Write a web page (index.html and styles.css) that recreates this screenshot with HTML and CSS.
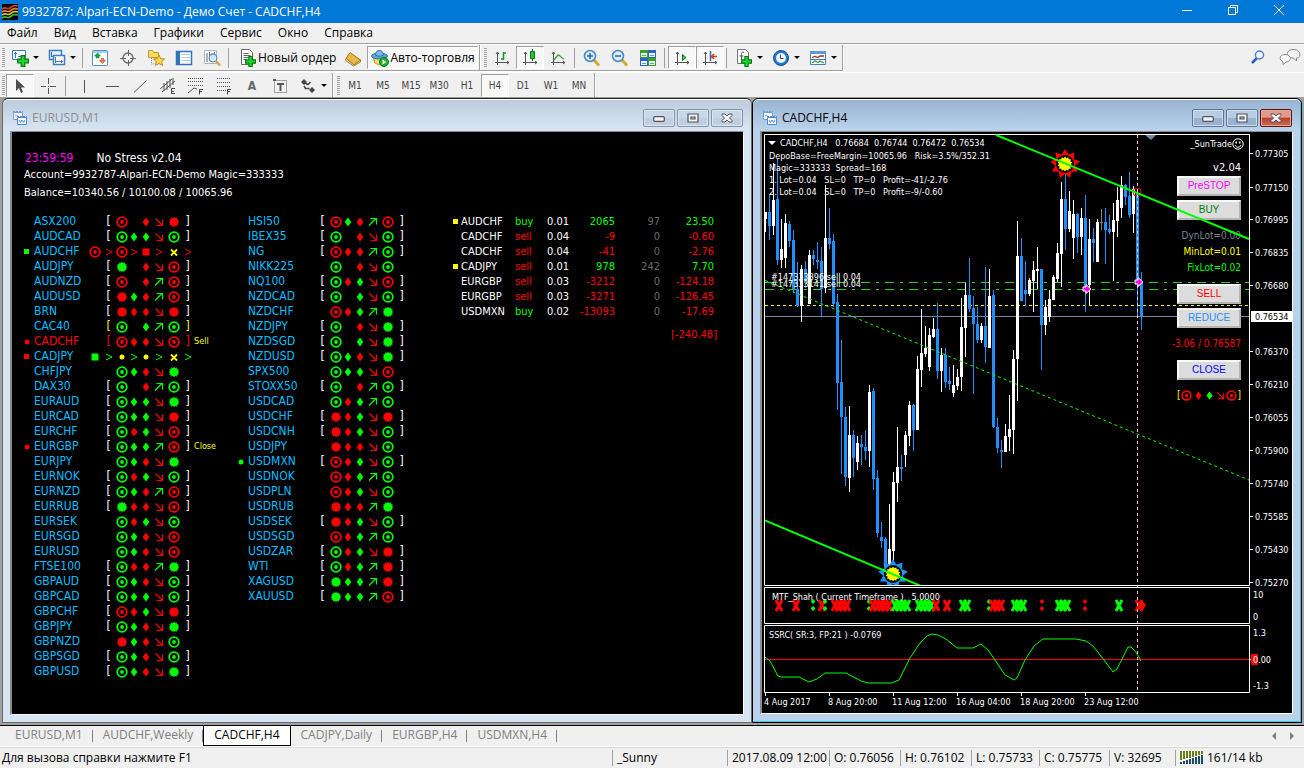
FILE: index.html
```html
<!DOCTYPE html>
<html lang="ru">
<head>
<meta charset="utf-8">
<title>9932787: Alpari-ECN-Demo - Демо Счет - CADCHF,H4</title>
<link rel="stylesheet" href="styles.css">
</head>
<body>
<svg class="defs" aria-hidden="true">
  <symbol id="s-target" viewBox="0 0 12 12"><circle cx="6" cy="6" r="4.800" fill="none" stroke="currentColor" stroke-width="1.800"/><circle cx="6" cy="6" r="1.900" fill="currentColor"/></symbol>
  <symbol id="s-burst" viewBox="0 0 12 12"><polygon fill="currentColor" points="11.5,6 9.86,7.03 10.8,8.75 8.83,8.83 8.75,10.8 7.03,9.86 6,11.5 4.97,9.86 3.25,10.8 3.17,8.83 1.2,8.75 2.14,7.03 .5,6 2.14,4.97 1.2,3.25 3.17,3.17 3.25,1.2 4.97,2.14 6,.5 7.03,2.14 8.75,1.2 8.83,3.17 10.8,3.25 9.86,4.97"/></symbol>
  <symbol id="s-diamond" viewBox="0 0 12 12"><path fill="currentColor" d="M6 1.500L9.300 6 6 10.500 2.700 6z"/></symbol>
  <symbol id="s-down" viewBox="0 0 12 12"><path fill="none" stroke="currentColor" stroke-width="1.200" d="M2.500 2.500l6.500 6.500M9.500 3.500v6H3.500"/></symbol>
  <symbol id="s-up" viewBox="0 0 12 12"><path fill="none" stroke="currentColor" stroke-width="1.200" d="M2 9.500l7-7M3.500 2.500h6v6"/></symbol>
  <symbol id="s-gt" viewBox="0 0 12 12"><path fill="none" stroke="currentColor" d="M3 3l6 3-6 3"/></symbol>
  <symbol id="s-square" viewBox="0 0 12 12"><path fill="currentColor" d="M2.500 2.500h7v7h-7z"/></symbol>
  <symbol id="s-mark" viewBox="0 0 12 12"><path fill="currentColor" d="M3 3h5v5H3z"/></symbol>
  <symbol id="s-dot" viewBox="0 0 12 12"><circle cx="6" cy="6" r="2.500" fill="currentColor"/></symbol>
  <symbol id="s-cross" viewBox="0 0 12 12"><path fill="none" stroke="currentColor" stroke-width="1.800" d="M3 3.500l6 6M9 3.500l-6 6"/></symbol>
  <symbol id="i-mdi" viewBox="0 0 14 14"><path fill="#fff" stroke="#6b9bea" d="M.5 1.500h9v7h-9z"/><path stroke="#6b9bea" stroke-dasharray="2 1" d="M0 .5h10"/><path fill="none" stroke="#6b9bea" d="M2 5l1.500-1L5 5.500"/><path fill="#fff" stroke="#4f86e4" d="M4.500 6.500h9v7h-9z"/><path stroke="#4f86e4" stroke-dasharray="2 1" d="M4 5.500h10"/><path fill="none" stroke="#4f86e4" d="M6 9l1.500 2.500L9 9l1.500 2.500L12 9"/></symbol>
  <symbol id="i-min" viewBox="0 0 12 12"><rect x=".7" y="4.700" width="10.600" height="4.600" rx="1" fill="#f4f4f4" stroke="#4d5363" stroke-width="1.200"/></symbol>
  <symbol id="i-max" viewBox="0 0 12 12"><path fill="#f4f4f4" fill-rule="evenodd" stroke="#4d5363" stroke-width="1.200" d="M1 2h10v8H1zM4 5h4v2H4z"/></symbol>
  <symbol id="i-x" viewBox="0 0 12 12"><path fill="#f4f4f4" stroke="#4d5363" d="M1 2h3l2 2 2-2h3v1.500L8.500 6 11 8.500V10H8L6 8l-2 2H1V8.500L3.500 6 1 3.500z"/></symbol>
  <symbol id="i-plus" viewBox="0 0 10 10"><path fill="#1fd72e" stroke="#087a12" d="M3.500.5h3v3h3v3h-3v3h-3v-3h-3v-3h3z"/></symbol>
  <symbol id="i-axes" viewBox="0 0 18 18"><path fill="none" stroke="#555" d="M4.500 3v13M2 13.500h14M3 5l1.500-2L6 5M14 12l2 1.500-2 1.500"/></symbol>
</svg>

<div class="app">
  <header class="titlebar">
    <svg class="logo" viewBox="0 0 16 16"><path d="M0 0h16v16H0z"/><g fill="none" stroke-width="1.600"><path stroke="#e8342a" d="M0 5c4-3 5 1 8-1s4-3 8-2"/><path stroke="#f28a1e" d="M0 8c4-3 5 1 8-1s4-3 8-2"/><path stroke="#c8d42a" d="M0 11c4-3 5 1 8-1s4-3 8-2"/><path stroke="#4cb82e" d="M0 14c4-3 5 1 8-1s4-3 8-2"/></g></svg>
    <h1 class="title">9932787: Alpari-ECN-Demo - Демо Счет - CADCHF,H4</h1>
    <div class="sysbuttons">
      <button aria-label="Свернуть"><svg viewBox="0 0 10 10"><path d="M0 5.500h10"/></svg></button>
      <button aria-label="Восстановить"><svg viewBox="0 0 10 10"><path d="M.5 2.500h7v7h-7zM2.500 2V.5h7v7H8"/></svg></button>
      <button aria-label="Закрыть"><svg viewBox="0 0 10 10"><path d="M0 0l10 10M10 0L0 10"/></svg></button>
    </div>
  </header>

  <nav class="menu">
    <button>Файл</button><button>Вид</button><button>Вставка</button><button>Графики</button><button>Сервис</button><button>Окно</button><button>Справка</button>
  </nav>

  <div class="toolrow">
    <div class="toolbar">
      <i class="grip"></i>
      <button class="tool drop" aria-label="Новый график"><svg viewBox="0 0 18 18"><path fill="#fff" stroke="#3b7cc0" d="M1.500 1.500h13v9h-13z"/><path stroke="#3b7cc0" fill="none" d="M4.500 3v6M3 4.500h3M7 7.500h6M11.500 6v3"/><use href="#i-plus" x="6" y="6" width="12" height="12"/></svg></button>
      <button class="tool drop" aria-label="Профили"><svg viewBox="0 0 18 18"><path fill="#e8f2fc" stroke="#3b7cc0" stroke-width="1.500" d="M1.500 1.500h12v9h-12z"/><path fill="none" stroke="#3b7cc0" d="M3.500 3v5M3 7.500h2"/><path fill="#fff" stroke="#3b7cc0" stroke-width="1.500" d="M5.500 6.500h11v9h-11z"/><path stroke="#3b7cc0" fill="none" d="M7.500 8v6M7 12.500h8M13.500 11v3"/></svg></button>
      <i class="sep"></i>
      <button class="tool" aria-label="Обзор рынка"><svg viewBox="0 0 18 18"><rect x="1.500" y="1.500" width="15" height="15" rx="1" fill="#fff" stroke="#4a90d0"/><path stroke="#a8cdec" stroke-width="2" d="M2 3h14"/><path fill="#18a83c" stroke="#0d7a26" stroke-width=".5" d="M6.500 4l3 3H8v2H5V7H3.500z"/><path fill="#f47a40" stroke="#c8401c" stroke-width=".5" d="M11.500 14.500l-3-3H10v-2h3v2h1.500z"/></svg></button>
      <button class="tool" aria-label="Окно данных"><svg viewBox="0 0 18 18"><circle cx="9" cy="9" r="5" fill="none" stroke="#666" stroke-width="1.300"/><path stroke="#666" d="M9.500 1v6M9.500 11v6M1 9.500h6M11 9.500h6"/></svg></button>
      <button class="tool" aria-label="Навигатор"><svg viewBox="0 0 18 18"><path fill="#f8dc6a" stroke="#c89a20" d="M1.500 3.500v-2h4l1 2h5v5h-10z"/><path fill="none" stroke="#888" stroke-dasharray="1 1" d="M4.500 9v6h4"/><path fill="#fdd840" stroke="#b88a18" d="M12 6l1.700 3.600 3.800.4-2.800 2.600.8 3.900-3.500-2-3.500 2 .8-3.900L6.500 10l3.800-.4z"/></svg></button>
      <button class="tool" aria-label="Терминал"><svg viewBox="0 0 18 18"><path fill="#fff" stroke="#2f74bc" stroke-width="1.500" d="M1.500 2.500h15v13h-15z"/><path fill="#2f74bc" d="M2 2h3v13H2z"/><path stroke="#b8cce0" d="M6 5.500h9M6 8.500h9M6 11.500h9"/></svg></button>
      <button class="tool" aria-label="Тестер стратегий"><svg viewBox="0 0 18 18"><path fill="#fff" stroke="#a9b6c2" d="M1.500 1.500h12v13h-12z"/><path stroke="#667" fill="none" d="M4 4v9M6.500 3v7M9 4v6M11.500 3v5"/><circle cx="10" cy="9" r="4" fill="#cfe6fa" fill-opacity=".85" stroke="#4a84c0"/><path stroke="#d6a838" stroke-width="2.500" d="M13 12l4 4.500"/></svg></button>
      <i class="sep"></i>
      <button class="tool text"><svg viewBox="0 0 18 18"><path fill="#fff" stroke="#666" d="M2.500.5h8l3 3v12h-11z"/><path stroke="#666" d="M4.500 4.500h5M4.500 6.500h7M4.500 8.500h5M4.500 10.500h3"/><use href="#i-plus" x="6" y="7" width="11" height="11"/></svg>Новый ордер</button>
      <button class="tool" aria-label="MetaEditor"><svg viewBox="0 0 18 18"><path fill="#e8b848" stroke="#a87818" d="M6 3.500l-4 6 8 6.500 6.500-5z"/><path fill="#fff3c8" stroke="#a87818" d="M2 9.500c-1 1 0 2.500 1 3l6.500 4.500 7-4v-2L10 16z"/></svg></button>
      <button class="tool text pressed"><svg viewBox="0 0 18 18"><path fill="#f8d868" stroke="#c09828" d="M2 8h13l-2 6-5 2-4-2z"/><ellipse cx="8.500" cy="7" rx="8" ry="3" fill="#5ca4d8" stroke="#2d74ac"/><path fill="#7cbce8" stroke="#2d74ac" d="M4.500 6c0-6 8-6 8 0-2 1.500-6 1.500-8 0z"/><circle cx="13" cy="13" r="4.500" fill="#1cae2c" stroke="#0a7a18"/><path fill="#fff" d="M11.500 10.500l4 2.500-4 2.500z"/></svg>Авто-торговля</button>
    </div>
    <div class="toolbar">
      <i class="grip"></i>
      <button class="tool" aria-label="Бары"><svg viewBox="0 0 18 18"><use href="#i-axes"/><path fill="none" stroke="#18942c" stroke-width="1.500" d="M10.500 3v8M8 10h2.500M10.500 4H13"/></svg></button>
      <button class="tool pressed" aria-label="Японские свечи"><svg viewBox="0 0 18 18"><use href="#i-axes"/><path stroke="#0a7a18" d="M11.500 0v12"/><path fill="#20c830" stroke="#0a7a18" d="M9.500 2.500h4v7h-4z"/></svg></button>
      <button class="tool" aria-label="Линия"><svg viewBox="0 0 18 18"><use href="#i-axes"/><path fill="none" stroke="#3aa03c" stroke-width="1.300" d="M5 11l4-5c2 0 3 3 6 4"/></svg></button>
      <i class="sep"></i>
      <button class="tool" aria-label="Увеличить"><svg viewBox="0 0 18 18"><path stroke="#d8a828" stroke-width="3" d="M11 11l5 5.500"/><circle cx="7" cy="7" r="5.500" fill="#d8ecfc" stroke="#3f86c6" stroke-width="1.500"/><path stroke="#2f6ca8" stroke-width="1.600" d="M4 7h6M7 4v6"/></svg></button>
      <button class="tool" aria-label="Уменьшить"><svg viewBox="0 0 18 18"><path stroke="#d8a828" stroke-width="3" d="M11 11l5 5.500"/><circle cx="7" cy="7" r="5.500" fill="#d8ecfc" stroke="#3f86c6" stroke-width="1.500"/><path stroke="#2f6ca8" stroke-width="1.600" d="M4 7h6"/></svg></button>
      <button class="tool" aria-label="Расположить окна"><svg viewBox="0 0 18 18"><path fill="#3c9e2a" d="M1 1h8v8H1zM9 9h8v8H9z"/><path fill="#2a62cc" d="M9 1h8v8H9zM1 9h8v8H1z"/><path fill="#e8f4e8" d="M2 4h6v4H2zM10 4h6v4h-6zM2 12h6v4H2zM10 12h6v4h-6z"/><path stroke="#6a9ac0" d="M3 6.500h4M11 6.500h4M3 14.500h4M11 14.500h4"/></svg></button>
      <i class="sep"></i>
      <button class="tool pressed" aria-label="Автопрокрутка"><svg viewBox="0 0 18 18"><use href="#i-axes"/><path fill="#4ad05a" stroke="#0a7a18" d="M9.500 5.500L13 8.500l-3.500 3z"/></svg></button>
      <button class="tool pressed" aria-label="Сдвиг графика"><svg viewBox="0 0 18 18"><use href="#i-axes"/><path stroke="#3468a8" stroke-width="1.500" d="M9.500 2v10"/><path fill="none" stroke="#c8401c" stroke-width="1.500" d="M16 7.500h-5M13 5l-2.500 2.500L13 10"/></svg></button>
      <i class="sep"></i>
      <button class="tool drop" aria-label="Индикаторы"><svg viewBox="0 0 18 18"><path fill="#fff" stroke="#777" d="M2.500.5h8l3 3v11h-11z"/><path fill="none" stroke="#555" d="M9 3.500c-2-1-2.500 0-2.500 2v6M4.500 7h4"/><use href="#i-plus" x="6" y="7" width="11" height="11"/></svg></button>
      <button class="tool drop" aria-label="Периоды"><svg viewBox="0 0 18 18"><circle cx="9" cy="9" r="7.500" fill="#1f78d0" stroke="#0f4f96"/><circle cx="9" cy="9" r="5" fill="#eef6fe"/><path fill="none" stroke="#445" d="M8.500 5.500V9.500h3"/></svg></button>
      <button class="tool drop" aria-label="Шаблоны"><svg viewBox="0 0 18 18"><path fill="#fff" stroke="#3f80bc" d="M1.500 2.500h15v13h-15z"/><path fill="#5a9cd8" d="M1 2h16v3H1z"/><path stroke="#3f80bc" d="M2 10.500h14"/><path fill="none" stroke="#a02818" stroke-width="1.300" d="M3 8.500l3-1 3 1 2-1.500h4"/><path fill="none" stroke="#3a9a3a" stroke-width="1.300" d="M3 14l3-2 3 1.500 2-1.500 4 2"/></svg></button>
    </div>
    <div class="toolright">
      <button class="tool" aria-label="Поиск"><svg viewBox="0 0 18 18"><path stroke="#2a5cc0" stroke-width="2.500" d="M8 10l-5 5"/><circle cx="10.500" cy="7" r="4" fill="#fff" stroke="#4a80dc" stroke-width="1.500"/></svg></button>
      <button class="tool" aria-label="Сообщество"><svg class="wide" viewBox="0 0 22 18"><path fill="#f6f6f8" stroke="#888" d="M14 1.500c8 0 9 8 3.500 8.500v3l-3-3c-8 0-8-8.500-.5-8.500z"/><path fill="#fdfdfd" stroke="#888" d="M6 6.500c7 0 7 7 1 7.500l-3 2.500v-3c-4-1-4-7 2-7z"/></svg></button>
    </div>
  </div>

  <div class="toolrow second">
    <div class="toolbar">
      <i class="grip"></i>
      <button class="tool pressed" aria-label="Курсор"><svg viewBox="0 0 18 18"><path fill="#4c4c4c" d="M5 2v12l3-3 2 5 2-1-2-4.500h4z"/></svg></button>
      <button class="tool" aria-label="Перекрестие"><svg viewBox="0 0 18 18"><path stroke="#555" d="M9.500 1v6M9.500 11v6M2 9.500h5M11 9.500h6M9 9.500h1"/></svg></button>
      <i class="sep far"></i>
      <button class="tool" aria-label="Вертикальная линия"><svg viewBox="0 0 18 18"><path stroke="#555" d="M9.500 3v13"/></svg></button>
      <button class="tool" aria-label="Горизонтальная линия"><svg viewBox="0 0 18 18"><path stroke="#555" d="M3 9.500h13"/></svg></button>
      <button class="tool" aria-label="Трендовая линия"><svg viewBox="0 0 18 18"><path stroke="#555" d="M3 15.500L15.500 3.500"/></svg></button>
      <button class="tool" aria-label="Канал"><svg viewBox="0 0 18 18"><path stroke="#555" fill="none" d="M1 12L13 2M3 15L16 4M5 6v8M8 4v9M11 2v9M14 1v7"/><path fill="none" stroke="#444" d="M16 11.500h-3.500v5H16M12.500 14.500H15"/></svg></button>
      <button class="tool" aria-label="Веер Фибоначчи"><svg viewBox="0 0 18 18"><path stroke="#555" stroke-dasharray="1 1" d="M1 1.500h16M1 4.500h16M1 8.500h16"/><path fill="none" stroke="#555" d="M1 16l6-5 3 1"/><path fill="none" stroke="#444" d="M16 12.500h-3.500v5M12.500 14.500H15"/></svg></button>
      <button class="tool" aria-label="Линии Фибоначчи"><svg viewBox="0 0 18 18"><path stroke="#555" stroke-dasharray="1 1" d="M2 1.500h14M2 5.500h14M2 9.500h14M2 13.500h9"/><path fill="none" stroke="#444" d="M16 12.500h-3.500v5M12.500 14.500H15"/></svg></button>
      <button class="tool letter" aria-label="Текст">A</button>
      <button class="tool" aria-label="Текстовая метка"><svg viewBox="0 0 18 18"><path fill="none" stroke="#555" stroke-dasharray="1 1" d="M3.500 3.500h12v12h-12z"/><path fill="#555" d="M2 2h3v2H2z"/><path fill="none" stroke="#555" stroke-width="2" d="M6 7h7M9.500 7v7"/></svg></button>
      <button class="tool drop" aria-label="Стрелки"><svg viewBox="0 0 18 18"><path fill="#444" d="M2 5l3-3 3 3-3 3zM10 13l3-3 3 3-3 3z"/><path fill="none" stroke="#444" stroke-width="1.500" d="M6 6l3 1.500L11.500 5M5 9l1.500 2.500h4"/></svg></button>
    </div>
    <div class="toolbar frames">
      <i class="grip"></i>
      <button class="tool">M1</button><button class="tool">M5</button><button class="tool">M15</button><button class="tool">M30</button><button class="tool">H1</button><button class="tool pressed">H4</button><button class="tool">D1</button><button class="tool">W1</button><button class="tool">MN</button>
    </div>
  </div>

  <main class="workspace">
    <section class="window">
      <div class="caption">
        <svg class="mdi"><use href="#i-mdi"/></svg><h2>EURUSD,M1</h2>
        <div class="winbuttons">
          <button aria-label="Свернуть"><svg><use href="#i-min"/></svg></button><button aria-label="Развернуть"><svg><use href="#i-max"/></svg></button><button aria-label="Закрыть"><svg><use href="#i-x"/></svg></button>
        </div>
      </div>
      <div class="client board">
        <p class="headline"><time>23:59:59</time><span>No Stress v2.04</span></p>
        <p class="account">Account=9932787-Alpari-ECN-Demo Magic=333333</p>
        <p class="account">Balance=10340.56 / 10100.08 / 10065.96</p>
        <div class="tables">
          <table class="signals" id="signals-a"></table>
          <table class="signals" id="signals-b"></table>
          <table class="orders" id="orders"></table>
        </div>
      </div>
    </section>

    <section class="window active">
      <div class="caption">
        <svg class="mdi"><use href="#i-mdi"/></svg><h2>CADCHF,H4</h2>
        <div class="winbuttons">
          <button aria-label="Свернуть"><svg><use href="#i-min"/></svg></button><button aria-label="Развернуть"><svg><use href="#i-max"/></svg></button><button class="close" aria-label="Закрыть"><svg><use href="#i-x"/></svg></button>
        </div>
      </div>
      <div class="client">
        <svg class="chart" id="chart" viewBox="762 132 530 581" preserveAspectRatio="xMinYMin meet"></svg>
        <div class="panel">
          <p class="expert">_SunTrade<svg viewBox="0 0 12 12"><circle cx="6" cy="6" r="5.200"/><path d="M3 7c1 3 5 3 6 0"/><path class="eyes" d="M3.500 3.500h1.500v2H3.500zM7 3.500h1.500v2H7z"/></svg></p>
          <p class="version">v2.04</p>
          <button class="magenta">PreSTOP</button>
          <button class="green">BUY</button>
          <div class="lots"><p class="dim">DynLot=0.00</p><p class="yellow">MinLot=0.01</p><p class="lime">FixLot=0.02</p></div>
          <button class="red">SELL</button>
          <button class="blue">REDUCE</button>
          <p class="result">-3.06 / 0.76587</p>
          <button class="navy">CLOSE</button>
          <p class="mini" id="mini"></p>
        </div>
        <svg class="chart over" viewBox="762 132 530 581" preserveAspectRatio="xMinYMin meet"><path class="trend" d="M996 135L1249 239"/></svg>
      </div>
    </section>
  </main>

  <nav class="tabs">
    <button>EURUSD,M1</button><button>AUDCHF,Weekly</button><button class="current">CADCHF,H4</button><button>CADJPY,Daily</button><button>EURGBP,H4</button><button>USDMXN,H4</button>
    <span class="scroll"><button aria-label="Назад"><svg viewBox="0 0 6 8"><path d="M5 0v8L1 4z"/></svg></button><button aria-label="Вперёд"><svg viewBox="0 0 6 8"><path d="M1 0v8l4-4z"/></svg></button></span>
  </nav>

  <footer class="status">
    <span>Для вызова справки нажмите F1</span><span>_Sunny</span><span>2017.08.09 12:00</span><span>O: 0.76056</span><span>H: 0.76102</span><span>L: 0.75733</span><span>C: 0.75775</span><span>V: 32695</span>
    <span class="net"><svg viewBox="0 0 23 13"><path stroke="#6b7d18" stroke-width="2" d="M1 0v9M4 0v8M7 0v7M10 0v7M13 0v6M16 0v5M19 0v4M22 0v3"/><path stroke="#1d4a66" stroke-width="2" d="M1 11v2M4 10v3M7 9v4M10 8v5M13 7v6M16 6v7M19 5v8M22 4v9"/></svg>161/14 kb</span>
  </footer>
</div>
<script src="app.js"></script>
</body>
</html>
```
FILE: styles.css
```css
* { box-sizing: border-box; }
body {
  margin: 0;
  background: #f0f0f0;
  color: #000;
  font: 12px/16px "Open Sans", "Noto Sans", sans-serif;
}
h1, h2, p { margin: 0; font-weight: normal; font-size: inherit; }
button { margin: 0; padding: 0; border: 0; background: none; font: inherit; color: inherit; }
.defs { position: absolute; width: 0; height: 0; }
.app { min-height: 100vh; display: flex; flex-direction: column; }

.titlebar { height: 23px; background: #0078d7; color: #fff; display: flex; align-items: center; padding: 0 2px; }
.logo { width: 16px; height: 16px; margin-right: 4px; }
.title { flex: 1; }
.sysbuttons { display: flex; }
.sysbuttons button { width: 46px; height: 23px; padding-bottom: 2px; }
.sysbuttons svg { width: 10px; height: 10px; fill: none; stroke: #fff; }

.menu { height: 21px; display: flex; align-items: center; padding-left: 7px; gap: 16px; border-bottom: 1px solid #a0a0a0; }

.toolrow { height: 28px; display: flex; border-top: 1px solid #fff; }
.toolbar { display: flex; align-items: center; padding: 0 1px 0 2px; border-right: 1px solid #a0a0a0; border-bottom: 1px solid #a0a0a0; height: 26px; box-shadow: 1px 1px #fff; }
.toolbar + .toolbar { padding-left: 4px; }
.second { height: 25px; }
.second .toolbar { height: 25px; border-bottom: 0; box-shadow: 1px 0 #fff; }
.grip { width: 3px; height: 19px; margin-right: 1px; background: repeating-linear-gradient(#a0a0a0 0 1px, transparent 1px 2px); }
.sep { width: 1px; height: 20px; margin: 0 3px 0 2px; background: #a0a0a0; }
.far { margin: 0 4px 0 3px; }
.tool { width: 28px; height: 23px; display: flex; align-items: center; justify-content: center; border: 1px solid transparent; }
.tool svg { width: 18px; height: 18px; }
.tool .wide { width: 22px; }
.drop { width: 37px; justify-content: flex-start; padding-left: 4px; }
.drop::after { content: ""; border: 3px solid transparent; border-top-color: #000; border-bottom: 0; margin-left: 4px; }
.text { width: auto; padding: 0 2px 0 6px; gap: 1px; }
.text.pressed { padding-left: 3px; }
.letter { font: bold 12px/16px "DejaVu Sans Condensed", "DejaVu Sans", sans-serif; color: #666; }
.pressed { border-color: #a0a0a0 #fff #fff #a0a0a0; background: #f8f8f8; }
.toolright { margin-left: auto; display: flex; gap: 4px; }
.frames { color: #444; font: 10px/14px "DejaVu Sans Condensed", "DejaVu Sans", sans-serif; }

.workspace {
  flex: 1;
  display: grid;
  grid-template-columns: 750fr 550fr;
  padding: 0 2px 2px;
  background: #a0a0a0;
  border-top: 1px solid #a0a0a0;
  border-bottom: 1px solid #000;
}
.window {
  display: flex;
  flex-direction: column;
  border: 1px solid #696969;
  border-top-color: #222;
  border-radius: 6px 6px 0 0;
  padding: 0 7px 7px;
  background: linear-gradient(#bccad9, #d7e4f2 30px);
  box-shadow: inset 0 1px #fff;
}
.active {
  border-color: #000;
  background: linear-gradient(#99b4d1, #b9d1ea 30px);
  box-shadow: inset 0 1px #fff, inset -1px -1px #35c9e8;
  padding-right: 8px;
  padding-bottom: 8px;
}
.caption { height: 32px; display: flex; align-items: center; gap: 5px; padding: 6px 1px 0 3px; color: #8b8f94; }
.active .caption { color: #000; }
.caption h2 { flex: 1; }
.mdi { width: 14px; height: 14px; }
.winbuttons { display: flex; gap: 2px; }
.winbuttons button {
  width: 32px; height: 18px;
  display: flex; align-items: center; justify-content: center;
  border: 1px solid #8593ab; border-radius: 2px;
  box-shadow: inset 0 0 0 1px #dce6f0;
  background: linear-gradient(#cbd7e4 50%, #c0cedd 50%);
}
.active .winbuttons button { background: linear-gradient(#b9cde2 50%, #98b1cd 50%); border-color: #5f7393; box-shadow: inset 0 0 0 1px #cfdeee; }
.active .winbuttons .close { background: linear-gradient(#e29a8a 45%, #b8402c 50%, #d06c54); border-color: #5a1414; box-shadow: inset 0 0 0 1px #e8a898; }
.winbuttons svg { width: 12px; height: 12px; }
.client { flex: 1; position: relative; background: #000; border: 1px solid #8c8c8c; border-left-width: 2px; border-right-color: #fff; border-bottom-color: #fff; color: #fff; }

.board { font: 11px/15px "DejaVu Sans Condensed", "DejaVu Sans", sans-serif; padding: 18px 0 30px 8px; }
.headline { font-size: 12px; line-height: 16px; display: flex; gap: 23px; padding-left: 5px; }
.headline time { color: #f0f; }
.account { line-height: 18px; padding-left: 4px; }
.tables { display: flex; align-items: flex-start; padding-top: 12px; }
table { border-collapse: collapse; table-layout: fixed; }
td { padding: 0; height: 15px; line-height: 15px; white-space: nowrap; }
.signals { width: 214px; font-size: 12px; color: #00bfff; }
.signals td { text-align: center; }
.signals .name { text-align: left; }
.signals .note { text-align: left; font-size: 9px; color: #ff0; }
.sig { width: 12px; height: 12px; display: block; margin: 0 auto; }
.orders { width: 267px; margin-left: 2px; }
.orders .num { text-align: right; }
.orders .total td { height: 23px; padding-top: 8px; }
.w { color: #fff; }
.g { color: #0f0; }
.r { color: #f00; }
.y { color: #ff0; }
.d { color: #696969; }

.chart { display: block; width: 100%; font: 9px "DejaVu Sans Condensed", "DejaVu Sans", sans-serif; }
.chart text { fill: #fff; }
.over { position: absolute; left: 0; top: 0; pointer-events: none; }
.trend { stroke: #0f0; stroke-width: 2; fill: none; }
.panel { position: absolute; top: 5px; right: 51px; width: 80px; display: flex; flex-direction: column; align-items: flex-end; font: 10px/14px "DejaVu Sans Condensed", "DejaVu Sans", sans-serif; }
.panel button { width: 64px; height: 20px; margin-bottom: 4px; background: #dcdcdc; border: 2px solid; border-color: #f8f8f8 #b4b4b4 #b4b4b4 #f8f8f8; font: 11px/14px "Liberation Sans", sans-serif; }
.panel .expert { display: flex; align-items: center; font-size: 9px; }
.expert svg { width: 12px; height: 12px; fill: none; stroke: #fff; margin-right: -3px; }
.expert .eyes { fill: #fff; stroke: none; }
.version { margin: 10px 0 1px; font-size: 11px; }
.lots { line-height: 16px; text-align: right; margin: 4px 0 8px; }
.result { margin: 5px 0 9px; font-size: 10px; color: #f00; white-space: nowrap; }
.mini { display: flex; align-items: center; margin-top: 4px; }
.mini svg { width: 11px; height: 11px; margin: 0; }
.mini svg:first-of-type { margin: 0 1px; }
.panel .magenta, .panel .green, .panel .red, .panel .navy, .panel .blue { font-size: 10px; }
.dim { color: #778899; }
.yellow { color: #ff0; }
.lime { color: #0f0; }
.magenta { color: #f0f; }
.green { color: #008000; }
.red { color: #f00; }
.blue { color: #1e90ff; }
.navy { color: #00f; }

.tabs { height: 21px; display: flex; align-items: stretch; padding-left: 5px; color: #808080; border-bottom: 1px solid #fff; }
.tabs > button { padding: 0 10px 2px; position: relative; }
.tabs > button:not(.current)::after { content: ""; position: absolute; right: 0; top: 4px; height: 12px; border-right: 1px solid #808080; }
.tabs > .current { background: #fff; color: #000; border: 1px solid #000; border-top: 0; }
.scroll { margin-left: auto; display: flex; gap: 12px; padding-right: 9px; }
.scroll svg { width: 6px; height: 8px; fill: #808080; }
.status { height: 22px; display: grid; grid-template-columns: 1fr 115px 102px 71px 71px 68px 70px 66px 129px; align-items: center; padding: 0 0 2px 2px; border-top: 1px solid #d8d8d8; }
.status span + span { border-left: 1px solid #a0a0a0; padding-left: 4px; }
.net { display: flex; align-items: center; gap: 4px; }
.net svg { width: 23px; height: 13px; }
```
FILE: app.js
```js
// Signal rows: name, bracket colour, glyphs, marker, note.
// Glyph codes: colour letter + shape (o target, b burst, d diamond, q square, p dot, x cross, > chevron).
const boardA = [
  ["ASX200", "w", "ro - rd dn rb"], ["AUDCAD", "w", "go gd gd dn go"],
  ["AUDCHF", "", "ro r> ro r> rq r> yx r>", "gm"],
  ["AUDJPY", "w", "gb - rd dn ro"], ["AUDNZD", "w", "ro - rd up ro"], ["AUDUSD", "w", "rb gd rd up ro"],
  ["BRN", "w", "rb rd rd dn rb"], ["CAC40", "y", "go - gd up go"], ["CADCHF", "r", "ro rd rd dn ro", "rp", "Sell"],
  ["CADJPY", "", "gq g> yp g> yp g> yx g>", "rm"],
  ["CHFJPY", "", "go gd rd dn gb"], ["DAX30", "w", "go - rd up go"], ["EURAUD", "w", "go gd gd dn gb"],
  ["EURCAD", "w", "go gd gd dn rb"], ["EURCHF", "w", "go rd gd dn ro"], ["EURGBP", "w", "go gd gd up ro", "rp", "Close"],
  ["EURJPY", "", "go gd rd dn gb"], ["EURNOK", "w", "go rd gd dn go"], ["EURNZD", "w", "go gd rd up ro"],
  ["EURRUB", "w", "gb rd rd dn ro"], ["EURSEK", "", "go rd gd dn go"], ["EURSGD", "", "go gd rd dn ro"],
  ["EURUSD", "", "go gd rd dn ro"], ["FTSE100", "w", "go rd rd up gb"], ["GBPAUD", "w", "go gd rd dn go"],
  ["GBPCAD", "w", "go gd gd dn go"], ["GBPCHF", "w", "ro rd gd dn rb"], ["GBPJPY", "w", "go gd rd dn gb"],
  ["GBPNZD", "", "rb gd rd dn go"], ["GBPSGD", "w", "go gd rd dn go"], ["GBPUSD", "w", "go gd rd dn gb"]
];
const boardB = [
  ["HSI50", "w", "ro gd rd up ro"], ["IBEX35", "w", "go - rd dn go"], ["NG", "w", "ro rd rd up go"],
  ["NIKK225", "", "go - rd dn go"], ["NQ100", "w", "go rd gd dn ro"], ["NZDCAD", "w", "go - gd dn go"],
  ["NZDCHF", "", "ro rd gd up gb"], ["NZDJPY", "w", "go - rd dn gb"], ["NZDSGD", "w", "go - gd dn gb"],
  ["NZDUSD", "w", "go gd rd dn gb"], ["SPX500", "", "go gd gd dn ro"], ["STOXX50", "w", "go - rd up go"],
  ["USDCAD", "", "go rd gd up go"], ["USDCHF", "w", "rb rd gd dn rb"], ["USDCNH", "w", "rb rd gd dn go"],
  ["USDJPY", "", "rb rd rd dn go"], ["USDMXN", "w", "ro rd gd dn go", "gp"], ["USDNOK", "", "ro rd gd up go"],
  ["USDPLN", "", "ro rd gd dn go"], ["USDRUB", "", "rb rd rd up gb"], ["USDSEK", "w", "rb rd gd dn go"],
  ["USDSGD", "", "ro rd gd up go"], ["USDZAR", "w", "go rd gd dn rb"], ["WTI", "w", "go rd gd up rb"],
  ["XAGUSD", "w", "gb gd gd up rb"], ["XAUUSD", "w", "gb gd gd up ro"]
];
const shapes = { o: "target", b: "burst", d: "diamond", q: "square", p: "dot", x: "cross", ">": "gt", m: "mark" };

function glyph(code) {
  if (!code || code === "-") return "";
  if (code === "dn") return '<svg class="sig r"><use href="#s-down"/></svg>';
  if (code === "up") return '<svg class="sig g"><use href="#s-up"/></svg>';
  return `<svg class="sig ${code[0]}"><use href="#s-${shapes[code[1]]}"/></svg>`;
}

function fillBoard(id, rows) {
  const cols = [14, 54, 14, 13, 13, 12, 11, 15, 15, 13, 40].map(w => `<col style="width:${w}px">`).join("");
  document.getElementById(id).innerHTML = `<colgroup>${cols}</colgroup><tbody>` + rows.map(([name, frame, codes, mark, note]) => {
    const list = codes.split(" ");
    let cells;
    if (list.length === 8) {
      cells = list.map(glyph);
    } else {
      const b = s => (frame ? `<span class="${frame}">${s}</span>` : "");
      cells = ["", b("["), ...list.map(glyph), b("]")];
    }
    return `<tr><td>${glyph(mark)}</td><td class="name ${frame === "r" ? "r" : ""}">${name}</td>` +
      cells.map(c => `<td>${c}</td>`).join("") + `<td class="note">${note || ""}</td></tr>`;
  }).join("") + "</tbody>";
}
fillBoard("signals-a", boardA);
fillBoard("signals-b", boardB);

const orders = [
  ["AUDCHF", "buy", "0.01", "2065", "97", "23.50", 1], ["CADCHF", "sell", "0.04", "-9", "0", "-0.60"],
  ["CADCHF", "sell", "0.04", "-41", "0", "-2.76"], ["CADJPY", "sell", "0.01", "978", "242", "7.70", 1],
  ["EURGBP", "sell", "0.03", "-3212", "0", "-124.18"], ["EURGBP", "sell", "0.03", "-3271", "0", "-126.45"],
  ["USDMXN", "buy", "0.02", "-13093", "0", "-17.69"]
];
const tone = v => (v[0] === "-" ? "r" : "g");
document.getElementById("orders").innerHTML =
  "<colgroup>" + [11, 54, 32, 28, 40, 45, 54, 3].map(w => `<col style="width:${w}px">`).join("") + "</colgroup><tbody>" +
  orders.map(o => `<tr><td>${o[6] ? glyph("ym") : ""}</td><td>${o[0]}</td><td class="${o[1] === "buy" ? "g" : "r"}">${o[1]}</td><td>${o[2]}</td>` +
    `<td class="num ${tone(o[3])}">${o[3]}</td><td class="num d">${o[4]}</td><td class="num ${tone(o[5])}">${o[5]}</td><td></td></tr>`).join("") +
  '<tr class="total"><td colspan="8" class="num r">[-240.48]</td></tr></tbody>';

document.getElementById("mini").innerHTML =
  '<span class="y">[</span>' + "ro rd gd dn ro".split(" ").map(glyph).join("") + '<span class="y">]</span>';

// Candles: high, low, body top, body bottom, colour; one every 4px.
const candles = `212 232 212 219 w|194 240 212 226 b|163 235 200 226 w|158 265 199 260 b|219 268 249 260 w|214 268 223 258 w|221 247 224 241 b|230 292 240 289 b|262 307 289 306 b|265 322 269 306 w|261 288 269 282 b|250 304 255 304 w|250 265 255 259 b|242 269 260 262 b|247 317 261 289 b|185 293 238 288 w|208 249 238 244 b|234 307 241 304 b|294 410 302 383 b|340 474 382 417 b|407 486 417 477 b|406 492 435 478 w|430 477 435 458 b|436 470 443 462 w|435 465 444 447 b|430 460 447 451 b|385 467 392 451 w|388 490 391 479 b|470 537 478 533 b|522 548 537 541 b|537 570 539 567 b|504 566 549 564 w|472 565 482 551 w|427 502 467 483 w|455 481 467 469 b|431 467 435 455 w|401 446 405 436 w|404 451 405 430 b|356 430 369 430 w|309 387 353 370 w|326 357 348 354 w|328 371 335 367 w|318 338 329 337 w|303 379 329 371 b|348 392 355 371 w|348 388 355 382 b|367 390 381 384 b|365 397 385 393 w|369 390 377 386 w|298 391 327 377 w|283 357 295 328 w|258 312 295 309 b|296 394 308 324 b|307 343 324 340 b|323 343 326 340 w|267 363 326 347 b|269 348 296 348 w|290 428 295 427 b|418 453 427 448 b|440 468 450 452 b|424 452 436 452 w|395 451 429 437 w|350 454 359 430 w|221 401 256 359 w|238 301 256 301 b|261 306 290 294 b|278 296 280 294 w|261 312 270 281 w|247 289 269 271 w|269 370 269 325 b|300 335 307 325 w|290 322 299 317 w|275 300 277 300 w|243 282 253 279 w|182 287 199 254 w|172 250 199 229 b|191 232 211 229 w|200 259 214 238 w|213 253 214 237 b|208 255 218 237 w|195 312 218 289 b|219 305 239 285 w|228 262 239 243 b|219 262 222 262 w|209 230 222 223 n|208 264 222 230 b|215 234 229 232 b|203 281 220 232 w|187 237 200 221 w|176 218 185 208 w|184 205 185 197 b|172 218 196 215 b|186 233 189 214 w|190 315 193 281 b|272 330 283 316 b`;
const paint = { w: "#fff", b: "#1e90ff", n: "#808080" };
let bars = "";
candles.split("|").forEach((c, i) => {
  const [hi, lo, top, bottom, kind] = c.split(" ");
  const x = 765 + i * 4;
  bars += `<path fill="${paint[kind]}" d="M${x} ${hi}h1V${lo}h-1zM${x - 1} ${top}h3V${bottom}h-3z"/>`;
});

function sun(x, y, color) {
  const ring = (n, outer, inner) => Array.from({ length: n * 2 }, (_, k) => {
    const r = k % 2 ? inner : outer, a = Math.PI * k / n - Math.PI / 2;
    return (x + r * Math.cos(a)).toFixed(1) + "," + (y + r * Math.sin(a)).toFixed(1);
  }).join(" ");
  return `<polygon points="${ring(9, 15, 10)}" fill="${color}"/><circle cx="${x}" cy="${y}" r="9"/><polygon points="${ring(14, 7.5, 6)}" fill="#ff0"/>`;
}

// Indicator crosses: colour, first x, last x; "-" draws a pair of dots.
const crosses = "r 779 779|r 796 796|g 813 -|r 822 822|g 825 -|r 835 848|g 869 -|r 873 889|g 895 907|g 919 932|r 936 936|r 947 947|g 963 967|g 989 -|r 993 1004|g 1015 1024|r 1042 -|g 1059 1067|r 1085 -|g 1119 1119|r 1139 1139";
let marks = '<path fill="#f00" d="M1140 600h2l4 5.500-4 5.500h-2z"/>';
crosses.split("|").forEach(c => {
  const [k, a, b] = c.split(" ");
  const color = k === "r" ? "#f00" : "#0f0";
  if (b === "-") {
    marks += `<path fill="${color}" d="M${a - 2} 601l2-2 2 2v1l-2 2-2-2zM${a - 2} 608l2-2 2 2v1l-2 2-2-2z"/>`;
  } else {
    for (let x = +a; x <= +b; x += 4) marks += `<path stroke="${color}" stroke-width="3" d="M${x - 3} 600l6 11M${x + 3} 600l-6 11"/>`;
  }
});

const prices = [["0.77305", 153], ["0.77150", 187], ["0.76995", 219], ["0.76835", 252], ["0.76680", 285], ["0.76370", 351], ["0.76210", 384], ["0.76055", 417], ["0.75900", 450], ["0.75740", 483], ["0.75585", 516], ["0.75430", 549], ["0.75270", 582]];
const dates = [["4 Aug 2017", 765], ["8 Aug 20:00", 829], ["11 Aug 12:00", 893], ["16 Aug 04:00", 957], ["18 Aug 20:00", 1021], ["23 Aug 12:00", 1085]];
const arrow = (x, y) => `<path fill="#f0f" stroke="#fff" d="M${x - 4} ${y - 2}h3v-2.500l5 4.500-5 4.500v-2.500h-3z"/>`;

document.getElementById("chart").innerHTML = `
<clipPath id="main"><path d="M765 135h484v450H765z"/></clipPath>
<g clip-path="url(#main)">
  <path stroke="#778899" d="M765 316.500h484"/>
  <g stroke="#32cd32" stroke-dasharray="9 6 3 6"><path d="M765 282.500h484"/><path d="M765 289.500h484"/></g>
  <path stroke="#ff0" stroke-dasharray="3 3" d="M765 305.500h484"/>
  ${bars}
  <path stroke="#0f0" stroke-dasharray="3 3" d="M765 280.500L1249 480"/>
  ${sun(1065, 164, "#f00")}${sun(893, 574, "#1e90ff")}
  <path class="trend" d="M765 520.500L921 586"/>
  <circle cx="1137" cy="192" r="4" fill="none" stroke="#f00"/>
  <path fill="#778899" d="M1145 135h11l-5 5z"/>
</g>
${marks}
<path stroke="#f00" d="M765 659.500h484"/>
<polyline fill="none" stroke="#0f0" points="765,657 770,661 778,676 781,677 799,677 809,682 817,679 825,673 846,673 861,681 868,683 891,683 899,680 905,668 910,658 920,643 927,636 932,634 938,635 946,639 957,648 973,648 981,644 988,650 997,663 1005,675 1014,680 1017,678 1025,660 1034,646 1043,639 1076,639 1086,641 1093,646 1104,660 1113,672 1117,669 1123,657 1128,647 1131,647 1135,651 1139,657 1141,661"/>
<path stroke="#ffc0cb" stroke-dasharray="3 3" d="M1137.500 135v557"/>
${arrow(1087, 289)}${arrow(1139, 282)}
<g fill="none" stroke="#fff"><path d="M764.500 134.500h485v451h-485zM764.500 587.500h485v36h-485zM764.500 625.500h485v67h-485z"/>
<path d="${prices.map(p => `M1250 ${p[1] + .5}h3`).join("")}M1250 659.500h3${dates.map(d => `M${d[1] + .5} 693v3`).join("")}"/></g>
<path fill="#fff" d="M768 141h8l-4 4z"/>
<text x="780" y="146">CADCHF,H4&#160;&#160; 0.76684&#160; 0.76744&#160; 0.76472&#160; 0.76534</text>
<text x="769" y="159">DepoBase=FreeMargin=10065.96&#160;&#160; Risk=3.5%/352.31</text>
<text x="769" y="171">Magic=333333&#160; Spread=168</text>
<text x="769" y="183">1. Lot=0.04&#160;&#160; SL=0&#160;&#160; TP=0&#160;&#160; Profit=-41/-2.76</text>
<text x="769" y="195">2. Lot=0.04&#160;&#160; SL=0&#160;&#160; TP=0&#160;&#160; Profit=-9/-0.60</text>
<text x="771" y="280">#147333396 sell 0.04</text>
<text x="771" y="287">#147333141 sell 0.04</text>
<text x="772" y="600">MTF_Shah ( Current Timeframe )&#160;&#160; 5.0000</text>
<text x="769" y="638">SSRC( SR:3, FP:21 ) -0.0769</text>
${prices.map(p => `<text x="1255" y="${p[1] + 4}">${p[0]}</text>`).join("")}
<path fill="#fff" d="M1251 311h41v11h-41z"/><text x="1255" y="320" style="fill:#000">0.76534</text>
<text x="1253" y="598">10</text><text x="1253" y="620">0</text>
<path fill="#f00" d="M1251 654h7v11h-7z"/>
<text x="1253" y="636">1.3</text><text x="1253" y="663">0.00</text><text x="1253" y="689">-1.3</text>
${dates.map(d => `<text x="${d[1] - 1}" y="705">${d[0]}</text>`).join("")}`;
```
